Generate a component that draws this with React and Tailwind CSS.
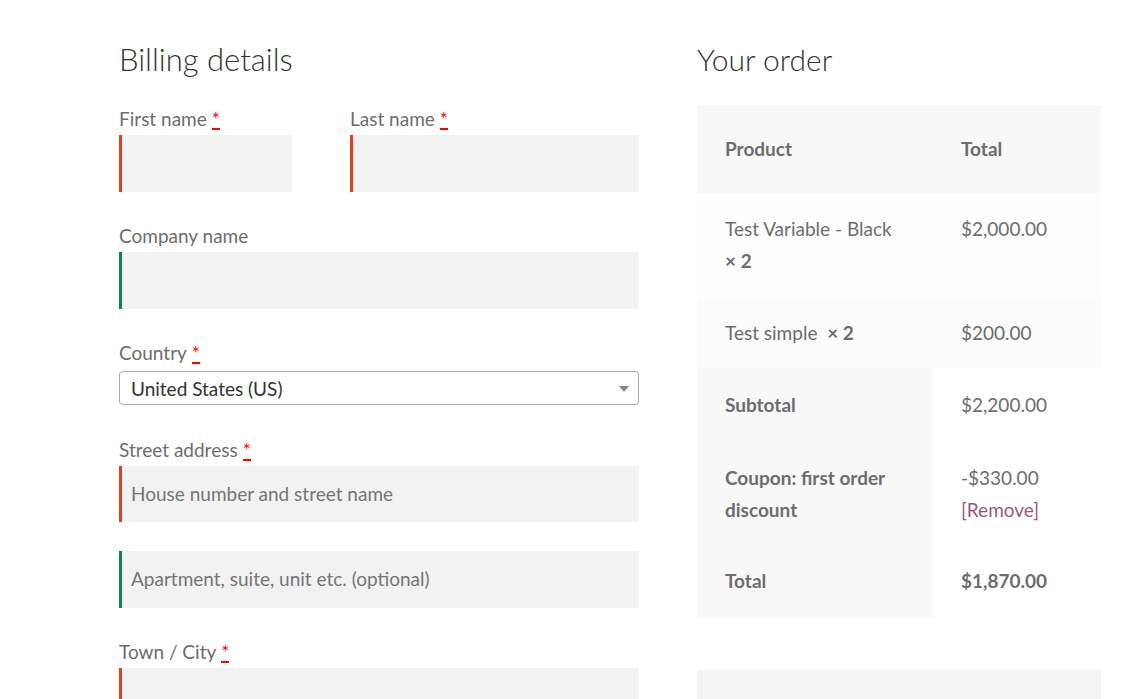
import React from 'react';

const font = { fontFamily: 'Lato, "Open Sans", sans-serif' };

function Req() {
  return (
    <abbr className="ml-[5px] text-[#ff0000] no-underline border-b-2 border-dashed border-[#ff0000] leading-none" title="required">
      *
    </abbr>
  );
}

function Label({ children, required }) {
  return (
    <div className="h-[30px] leading-[30px] text-[19px] text-[#6d6d6d] mb-px flex items-center">
      <span>{children}</span>
      {required && <Req />}
    </div>
  );
}

function Field({ tone = 'red', placeholder, h = 'h-[57px]' }) {
  const border = tone === 'red' ? 'border-[#e2401c]' : 'border-[#0f834d]';
  return (
    <div className={`${h} bg-[#f2f2f2] border-l-[3px] ${border} flex items-center pl-[9px] text-[19px] text-[#757575]`}>
      {placeholder}
    </div>
  );
}

export default function App() {
  return (
    <div className="min-h-screen bg-white overflow-hidden" style={font}>
      <div className="flex pl-[119px] pt-[40px] gap-[58px]">
        {/* Billing */}
        <div className="w-[520px] shrink-0">
          <h3 className="h-[40px] leading-[38px] text-[31px] font-light text-[#333333] mb-[24px]">Billing details</h3>

          <div className="flex mb-[29px]">
            <div className="w-[173px]">
              <Label required>First name</Label>
              <Field />
            </div>
            <div className="ml-[58px] flex-1">
              <Label required>Last name</Label>
              <Field />
            </div>
          </div>

          <div className="mb-[29px]">
            <Label>Company name</Label>
            <Field tone="green" />
          </div>

          <div className="mb-[30px]">
            <Label required>Country</Label>
            <div className="mt-[3px] h-[34px] border border-[#aaaaaa] rounded-[4px] flex items-center justify-between pl-[11px] pr-[9px] pt-[2px] text-[19px] text-[#333333]">
              <span>United States (US)</span>
              <span className="w-0 h-0 border-l-[5px] border-r-[5px] border-t-[6px] border-l-transparent border-r-transparent border-t-[#888888]" />
            </div>
          </div>

          <div className="mb-[29px]">
            <Label required>Street address</Label>
            <Field placeholder="House number and street name" h="h-[56px]" />
          </div>

          <div className="mb-[29px]">
            <Field tone="green" placeholder="Apartment, suite, unit etc. (optional)" />
          </div>

          <div>
            <Label required>Town / City</Label>
            <Field />
          </div>
        </div>

        {/* Order */}
        <div className="w-[404px] shrink-0">
          <h3 className="h-[40px] leading-[38px] text-[30px] font-light text-[#333333] mb-[25px]">Your order</h3>

          <div className="text-[19px] text-[#6d6d6d]">
            <div className="grid grid-cols-[236px_168px] h-[88px] items-center bg-[#f8f8f8] font-bold">
              <div className="pl-[28px]">Product</div>
              <div className="pl-[28px]">Total</div>
            </div>
            <div className="grid grid-cols-[236px_168px] h-[105px] items-start pt-[20px] bg-[#fdfdfd] leading-[32px]">
              <div className="pl-[28px] pr-[20px]">
                Test Variable - Black <strong className="font-bold whitespace-nowrap">× 2</strong>
              </div>
              <div className="pl-[28px]">$2,000.00</div>
            </div>
            <div className="grid grid-cols-[236px_168px] h-[70px] items-center bg-[#fbfbfb]">
              <div className="pl-[28px]">
                Test simple&nbsp; <strong className="font-bold whitespace-nowrap">× 2</strong>
              </div>
              <div className="pl-[28px]">$200.00</div>
            </div>
            <div className="grid grid-cols-[236px_168px] leading-[32px]">
              <div className="bg-[#f8f8f8] pl-[28px] font-bold h-[74px] flex items-center">Subtotal</div>
              <div className="pl-[28px] h-[74px] flex items-center">$2,200.00</div>
              <div className="bg-[#f8f8f8] pl-[28px] pr-[20px] font-bold h-[103px] flex items-center">Coupon: first order discount</div>
              <div className="pl-[28px] h-[103px] flex flex-col justify-center">
                <span>-$330.00</span>
                <span className="text-[#96588a]">[Remove]</span>
              </div>
              <div className="bg-[#f8f8f8] pl-[28px] font-bold h-[72px] flex items-center">Total</div>
              <div className="pl-[28px] font-bold h-[72px] flex items-center">$1,870.00</div>
            </div>
          </div>

          <div className="mt-[53px] h-[60px] bg-[#f3f3f3]" />
        </div>
      </div>
    </div>
  );
}
